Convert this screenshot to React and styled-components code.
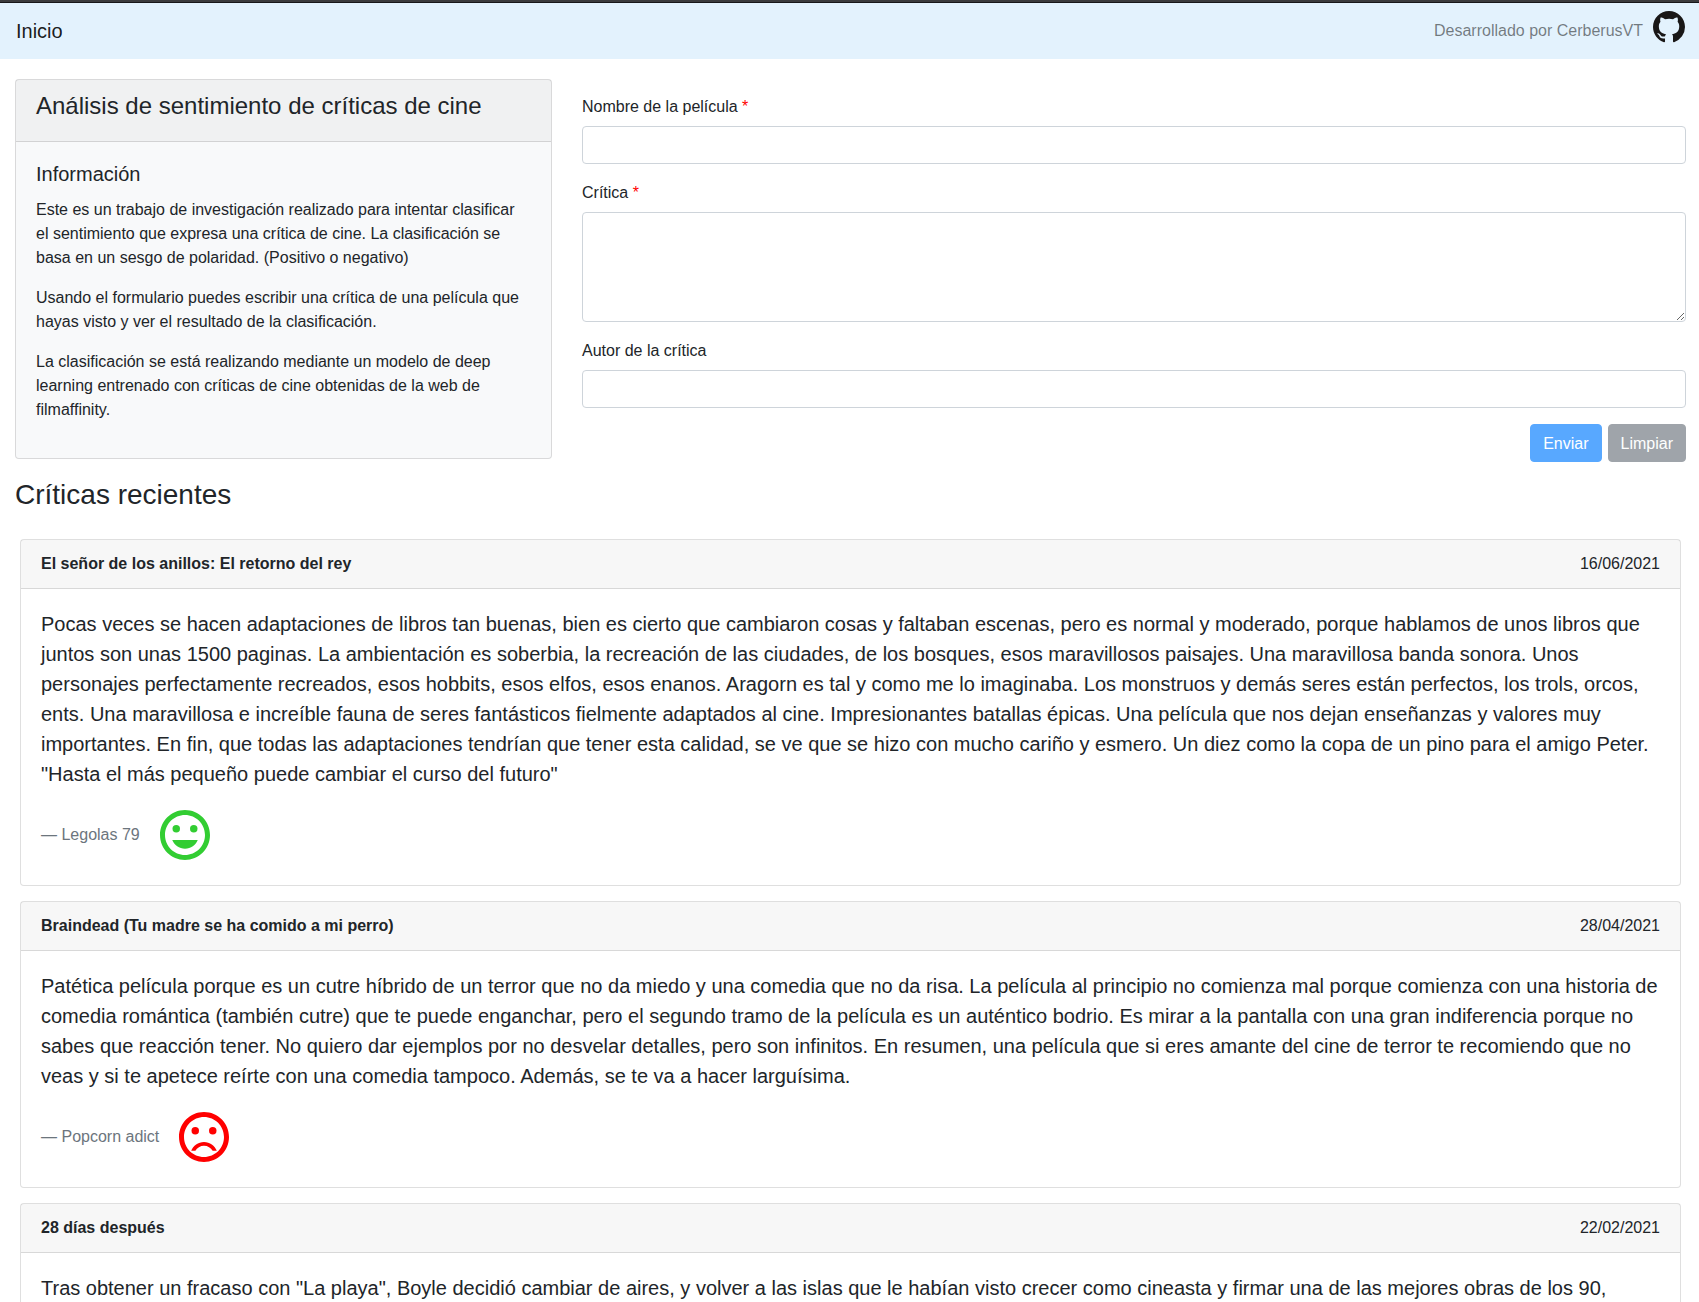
import React, { useId } from "react";
import styled, { createGlobalStyle } from "styled-components";

const GlobalStyle = createGlobalStyle`
  *, *::before, *::after { box-sizing: border-box; }
  body {
    margin: 0;
    background: #fff;
    color: #212529;
    font-family: "Liberation Sans", Arial, sans-serif;
    font-size: 16px;
    line-height: 24px;
  }
`;

const Page = styled.div`
  border-top: 2px solid #3b3b3d;
`;

const Navbar = styled.nav`
  display: flex;
  justify-content: space-between;
  align-items: flex-start;
  padding: 8px 14px 8px 16px;
  border-top: 1px solid #17171a;
  background: #e3f2fd;
`;

const Brand = styled.a`
  padding: 5px 0;
  color: rgba(0, 0, 0, 0.9);
  font-size: 20px;
  line-height: 30px;
  text-decoration: none;
`;

const Credits = styled.a`
  display: flex;
  align-items: flex-start;
  gap: 10px;
  color: rgba(0, 0, 0, 0.5);
  text-decoration: none;
`;

const CreditsText = styled.span`
  padding: 7px 0;
  line-height: 26px;
`;

const GithubMark = styled.svg`
  display: block;
  width: 32px;
  height: 32px;
  fill: #191717;
`;

const Intro = styled.section`
  display: grid;
  grid-template-columns: calc((100% + 2px) / 3) minmax(0, 1fr);
  padding-top: 20px;
`;

const InfoColumn = styled.div`
  padding: 0 15px;
`;

const Card = styled.article`
  border: 1px solid rgba(0, 0, 0, 0.125);
  border-radius: 4px;
  background: ${(p) => (p.$tinted ? "#f8f9fa" : "#fff")};
`;

const CardHeader = styled.header`
  display: flex;
  justify-content: space-between;
  padding: 12px 20px;
  border-bottom: 1px solid rgba(0, 0, 0, 0.125);
  background: rgba(0, 0, 0, 0.03);
`;

const CardBody = styled.div`
  padding: 20px;
`;

const InfoTitle = styled.h1`
  margin: 0 0 9px;
  font-size: 24px;
  font-weight: 500;
  line-height: 28px;
`;

const InfoSubtitle = styled.h2`
  margin: 0 0 12px;
  font-size: 20px;
  font-weight: 500;
  line-height: 24px;
`;

const Paragraph = styled.p`
  margin: 0 0 16px;
`;

const Form = styled.form`
  padding: 15px 13px 15px 15px;
`;

const FieldGroup = styled.div`
  display: flex;
  flex-direction: column;
  gap: 6px;
  margin-bottom: 16px;
`;

const Label = styled.label`
  line-height: 26px;
`;

const Required = styled.span`
  color: #f00;
`;

const Control = styled.input`
  display: block;
  width: 100%;
  padding: 6px 12px;
  border: 1px solid #ced4da;
  border-radius: 4px;
  background: #fff;
  color: #495057;
  font: inherit;
  line-height: 24px;
  resize: vertical;
`;

const Actions = styled.div`
  display: flex;
  justify-content: flex-end;
  gap: 6px;
`;

const Button = styled.button`
  padding: 6px 12px 4px;
  border: 1px solid ${(p) => (p.$primary ? "#007bff" : "#6c757d")};
  border-radius: 4px;
  background: ${(p) => (p.$primary ? "#007bff" : "#6c757d")};
  color: #fff;
  font: inherit;
  line-height: 26px;

  &:disabled {
    opacity: 0.65;
  }
`;

const SectionTitle = styled.h2`
  margin: 0;
  padding: 0 15px;
  font-size: 28px;
  font-weight: 500;
  line-height: 36px;
`;

const ReviewList = styled.section`
  display: flex;
  flex-direction: column;
  gap: 15px;
  padding: 26px 18px 15px 20px;
`;

const ReviewTitle = styled.strong`
  font-weight: 700;
`;

const Quote = styled.blockquote`
  margin: 0;
  font-size: 20px;
  line-height: 30px;
`;

const Author = styled.footer`
  display: flex;
  align-items: center;
  gap: 15px;
  margin-top: 16px;
  color: #6c757d;
  font-size: 16px;
  line-height: 24px;
`;

const Face = styled.svg`
  display: block;
  width: 60px;
  height: 60px;
  fill: ${(p) => (p.$positive ? "#32cd32" : "#f00")};
`;

const RING =
  "M11.99 2C6.47 2 2 6.48 2 12s4.47 10 9.99 10C17.52 22 22 17.52 22 12S17.52 2 11.99 2zM12 20c-4.42 0-8-3.58-8-8s3.58-8 8-8 8 3.58 8 8-3.58 8-8 8z";
const SMILE = "M12 17.5c2.33 0 4.31-1.46 5.11-3.5H6.89c.8 2.04 2.78 3.5 5.11 3.5z";
const FROWN =
  "M12 14c-2.33 0-4.32 1.45-5.12 3.5h1.67c.69-1.19 1.97-2 3.45-2s2.75.81 3.45 2h1.67c-.8-2.05-2.79-3.5-5.12-3.5z";

function SentimentFace({ positive }) {
  return (
    <Face
      $positive={positive}
      viewBox="0 0 24 24"
      role="img"
      aria-label={positive ? "Positivo" : "Negativo"}
    >
      <path d={RING} />
      <circle cx="8.5" cy="9.5" r="1.5" />
      <circle cx="15.5" cy="9.5" r="1.5" />
      <path d={positive ? SMILE : FROWN} />
    </Face>
  );
}

function Field({ label, required, ...control }) {
  const id = useId();
  return (
    <FieldGroup>
      <Label htmlFor={id}>
        {label}
        {required && <Required> *</Required>}
      </Label>
      <Control id={id} required={required} {...control} />
    </FieldGroup>
  );
}

function Review({ title, date, text, author, positive }) {
  return (
    <Card>
      <CardHeader>
        <ReviewTitle>{title}</ReviewTitle>
        <time>{date}</time>
      </CardHeader>
      <CardBody>
        <Quote>
          {text}
          {author && (
            <Author>
              <span>— {author}</span>
              <SentimentFace positive={positive} />
            </Author>
          )}
        </Quote>
      </CardBody>
    </Card>
  );
}

const reviews = [
  {
    title: "El señor de los anillos: El retorno del rey",
    date: "16/06/2021",
    text: 'Pocas veces se hacen adaptaciones de libros tan buenas, bien es cierto que cambiaron cosas y faltaban escenas, pero es normal y moderado, porque hablamos de unos libros que juntos son unas 1500 paginas. La ambientación es soberbia, la recreación de las ciudades, de los bosques, esos maravillosos paisajes. Una maravillosa banda sonora. Unos personajes perfectamente recreados, esos hobbits, esos elfos, esos enanos. Aragorn es tal y como me lo imaginaba. Los monstruos y demás seres están perfectos, los trols, orcos, ents. Una maravillosa e increíble fauna de seres fantásticos fielmente adaptados al cine. Impresionantes batallas épicas. Una película que nos dejan enseñanzas y valores muy importantes. En fin, que todas las adaptaciones tendrían que tener esta calidad, se ve que se hizo con mucho cariño y esmero. Un diez como la copa de un pino para el amigo Peter. "Hasta el más pequeño puede cambiar el curso del futuro"',
    author: "Legolas 79",
    positive: true,
  },
  {
    title: "Braindead (Tu madre se ha comido a mi perro)",
    date: "28/04/2021",
    text: "Patética película porque es un cutre híbrido de un terror que no da miedo y una comedia que no da risa. La película al principio no comienza mal porque comienza con una historia de comedia romántica (también cutre) que te puede enganchar, pero el segundo tramo de la película es un auténtico bodrio. Es mirar a la pantalla con una gran indiferencia porque no sabes que reacción tener. No quiero dar ejemplos por no desvelar detalles, pero son infinitos. En resumen, una película que si eres amante del cine de terror te recomiendo que no veas y si te apetece reírte con una comedia tampoco. Además, se te va a hacer larguísima.",
    author: "Popcorn adict",
    positive: false,
  },
  {
    title: "28 días después",
    date: "22/02/2021",
    text: 'Tras obtener un fracaso con "La playa", Boyle decidió cambiar de aires, y volver a las islas que le habían visto crecer como cineasta y firmar una de las mejores obras de los 90,',
  },
];

export default function App() {
  return (
    <Page>
      <GlobalStyle />
      <Navbar>
        <Brand href="#inicio">Inicio</Brand>
        <Credits href="#github">
          <CreditsText>Desarrollado por CerberusVT</CreditsText>
          <GithubMark viewBox="0 0 16 16" aria-hidden="true">
            <path
              fillRule="evenodd"
              d="M8 0C3.58 0 0 3.58 0 8c0 3.54 2.29 6.53 5.47 7.59.4.07.55-.17.55-.38 0-.19-.01-.82-.01-1.49-2.01.37-2.53-.49-2.69-.94-.09-.23-.48-.94-.82-1.13-.28-.15-.68-.52-.01-.53.63-.01 1.08.58 1.23.82.72 1.21 1.87.87 2.33.66.07-.52.28-.87.51-1.07-1.78-.2-3.64-.89-3.64-3.95 0-.87.31-1.59.82-2.15-.08-.2-.36-1.02.08-2.12 0 0 .67-.21 2.2.82.64-.18 1.32-.27 2-.27s1.36.09 2 .27c1.53-1.04 2.2-.82 2.2-.82.44 1.1.16 1.92.08 2.12.51.56.82 1.27.82 2.15 0 3.07-1.87 3.75-3.65 3.95.29.25.54.73.54 1.48 0 1.07-.01 1.93-.01 2.2 0 .21.15.46.55.38A8.01 8.01 0 0 0 16 8c0-4.42-3.58-8-8-8z"
            />
          </GithubMark>
        </Credits>
      </Navbar>

      <main>
        <Intro>
          <InfoColumn>
            <Card $tinted>
              <CardHeader>
                <InfoTitle>Análisis de sentimiento de críticas de cine</InfoTitle>
              </CardHeader>
              <CardBody>
                <InfoSubtitle>Información</InfoSubtitle>
                <Paragraph>
                  Este es un trabajo de investigación realizado para intentar clasificar el
                  sentimiento que expresa una crítica de cine. La clasificación se basa en un
                  sesgo de polaridad. (Positivo o negativo)
                </Paragraph>
                <Paragraph>
                  Usando el formulario puedes escribir una crítica de una película que hayas
                  visto y ver el resultado de la clasificación.
                </Paragraph>
                <Paragraph>
                  La clasificación se está realizando mediante un modelo de deep learning
                  entrenado con críticas de cine obtenidas de la web de filmaffinity.
                </Paragraph>
              </CardBody>
            </Card>
          </InfoColumn>
          <Form>
            <Field label="Nombre de la película" required type="text" />
            <Field label="Crítica" required as="textarea" rows={4} />
            <Field label="Autor de la crítica" type="text" />
            <Actions>
              <Button type="submit" $primary disabled>
                Enviar
              </Button>
              <Button type="reset" disabled>
                Limpiar
              </Button>
            </Actions>
          </Form>
        </Intro>

        <SectionTitle>Críticas recientes</SectionTitle>
        <ReviewList>
          {reviews.map((review) => (
            <Review key={review.title} {...review} />
          ))}
        </ReviewList>
      </main>
    </Page>
  );
}
